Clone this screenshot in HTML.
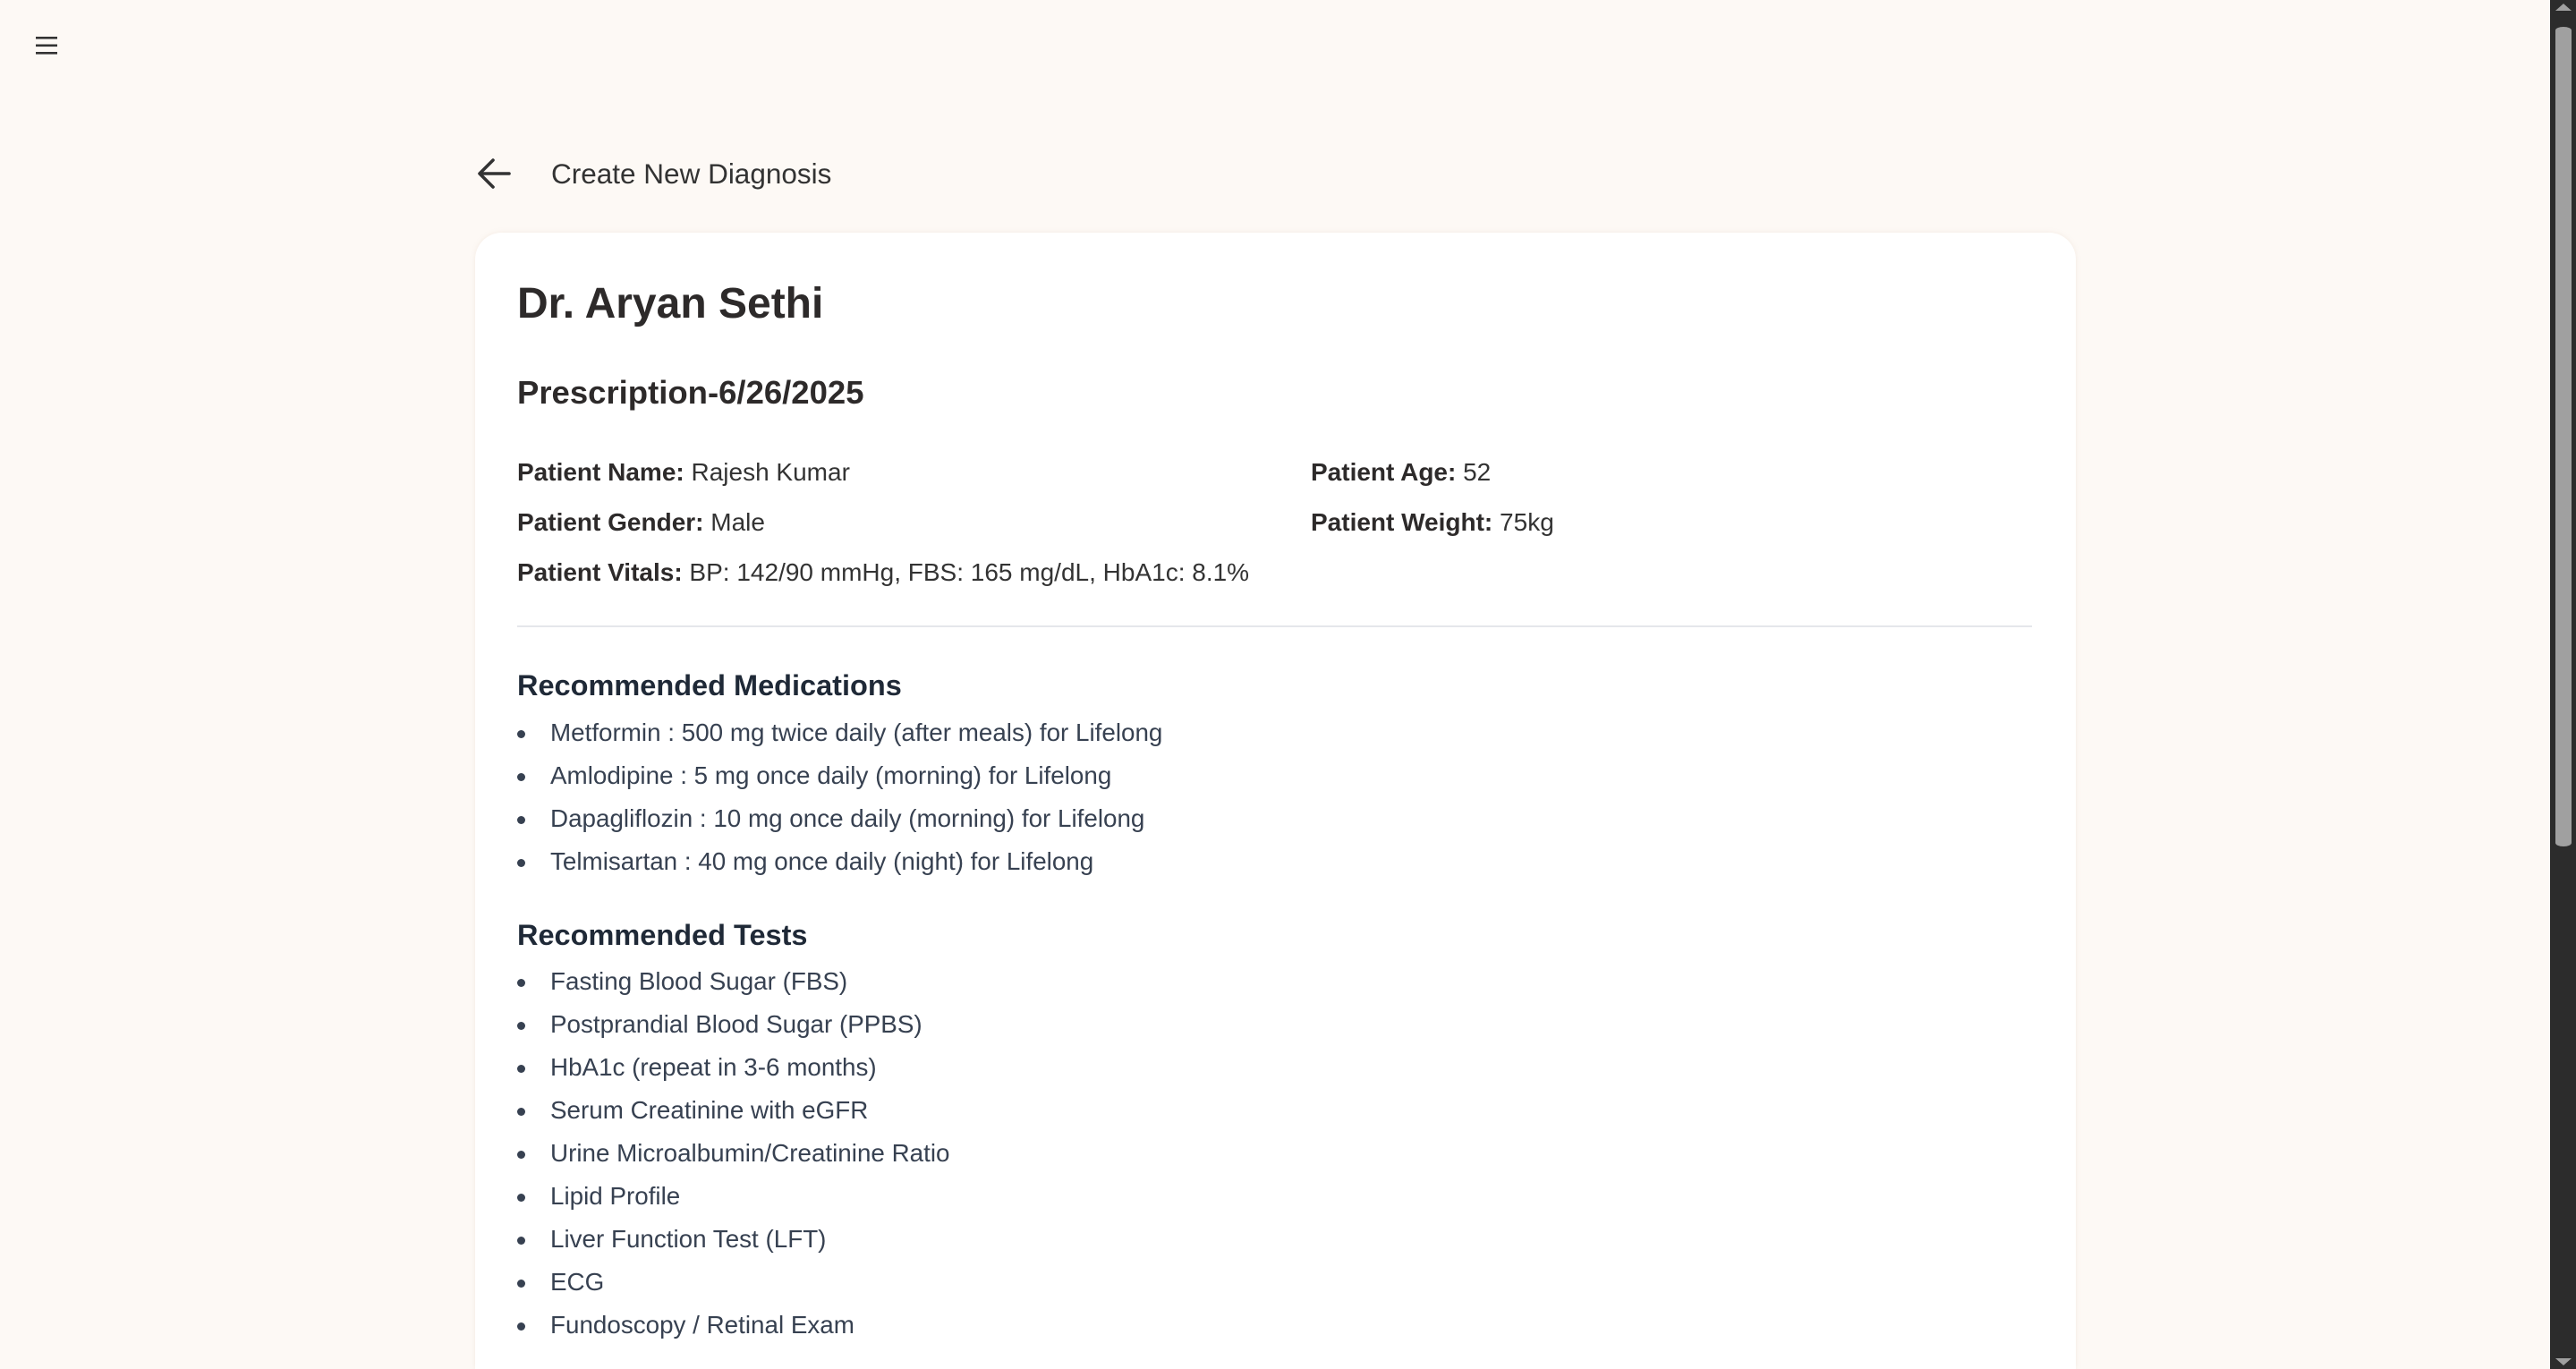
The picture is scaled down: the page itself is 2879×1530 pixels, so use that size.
<!DOCTYPE html>
<html><head><meta charset="utf-8"><style>
*{margin:0;padding:0;box-sizing:border-box}
html,body{width:2879px;height:1530px;overflow:hidden;background:#fdf9f5;font-family:"Liberation Sans",sans-serif;color:#333}
.a{position:absolute;white-space:nowrap;line-height:1}
.card{position:absolute;left:531px;top:260px;width:1789px;height:1270px;background:#fff;border-radius:30px 30px 0 0;box-shadow:0 0 6px rgba(200,170,150,.18)}
.li{position:absolute;left:615px;font-size:27.8px;color:#374151;line-height:1}
.li:before{content:"";position:absolute;left:-37px;top:11px;width:9px;height:9px;border-radius:50%;background:#374151}
.h{font-size:32.5px;font-weight:bold;color:#1f2937}
.p{font-size:28px;color:#333}
.p b{color:#2d2a2a}
</style></head><body>
<svg class="a" style="left:38px;top:38px" width="28" height="26" viewBox="0 0 28 26"><rect x="2" y="3" width="24" height="2.6" fill="#333"/><rect x="2" y="11.5" width="24" height="2.6" fill="#333"/><rect x="2" y="20" width="24" height="2.6" fill="#333"/></svg>
<svg class="a" style="left:530px;top:174px" width="44" height="40" viewBox="0 0 44 40"><path d="M39 20H7M21 5L6 20l15 15" fill="none" stroke="#333" stroke-width="3.6" stroke-linecap="round" stroke-linejoin="round"/></svg>
<div class="a" style="left:616px;top:179px;font-size:31.5px;color:#333">Create New Diagnosis</div>
<div class="card"></div>
<div class="a" style="left:578px;top:316px;font-size:48px;font-weight:bold;color:#2d2a2a">Dr. Aryan Sethi</div>
<div class="a" style="left:578px;top:421px;font-size:36.5px;font-weight:bold;color:#2d2a2a">Prescription-6/26/2025</div>
<div class="a p" style="left:578px;top:514px"><b>Patient Name:</b> Rajesh Kumar</div>
<div class="a p" style="left:1465px;top:514px"><b>Patient Age:</b> 52</div>
<div class="a p" style="left:578px;top:570px"><b>Patient Gender:</b> Male</div>
<div class="a p" style="left:1465px;top:570px"><b>Patient Weight:</b> 75kg</div>
<div class="a p" style="left:578px;top:626px"><b>Patient Vitals:</b> BP: 142/90 mmHg, FBS: 165 mg/dL, HbA1c: 8.1%</div>
<div class="a" style="left:578px;top:699px;width:1693px;height:2px;background:#e5e7eb"></div>
<div class="a h" style="left:578px;top:750px">Recommended Medications</div>
<div class="li" style="top:805px">Metformin : 500 mg twice daily (after meals) for Lifelong</div>
<div class="li" style="top:853px">Amlodipine : 5 mg once daily (morning) for Lifelong</div>
<div class="li" style="top:901px">Dapagliflozin : 10 mg once daily (morning) for Lifelong</div>
<div class="li" style="top:949px">Telmisartan : 40 mg once daily (night) for Lifelong</div>
<div class="a h" style="left:578px;top:1029px">Recommended Tests</div>
<div class="li" style="top:1083px">Fasting Blood Sugar (FBS)</div>
<div class="li" style="top:1131px">Postprandial Blood Sugar (PPBS)</div>
<div class="li" style="top:1179px">HbA1c (repeat in 3-6 months)</div>
<div class="li" style="top:1227px">Serum Creatinine with eGFR</div>
<div class="li" style="top:1275px">Urine Microalbumin/Creatinine Ratio</div>
<div class="li" style="top:1323px">Lipid Profile</div>
<div class="li" style="top:1371px">Liver Function Test (LFT)</div>
<div class="li" style="top:1419px">ECG</div>
<div class="li" style="top:1467px">Fundoscopy / Retinal Exam</div>
<div class="a" style="left:2850px;top:0;width:29px;height:1530px;background:#2c2c2c"></div>
<div class="a" style="left:2856px;top:30px;width:18px;height:916px;border-radius:9px/4px;background:#a0a0a0"></div>
<svg class="a" style="left:2856px;top:4px" width="18" height="8"><path d="M0 8L9 0L18 8Z" fill="#a0a0a0"/></svg>
<svg class="a" style="left:2856px;top:1518px" width="18" height="8"><path d="M0 0L9 8L18 0Z" fill="#a0a0a0"/></svg>
</body></html>
